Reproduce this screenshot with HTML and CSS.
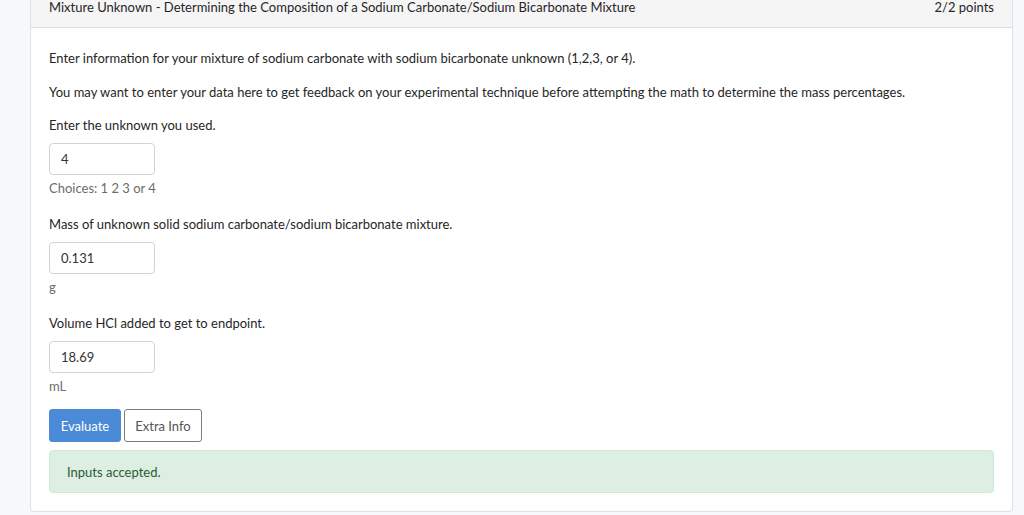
FILE: index.html
```html
<!DOCTYPE html>
<html lang="en">
<head>
<meta charset="utf-8">
<link rel="stylesheet" href="styles.css">
</head>
<body>
<div class="card">
  <div class="card-header">
    <span class="title">Mixture Unknown - Determining the Composition of a Sodium Carbonate/Sodium Bicarbonate Mixture</span>
    <span class="points">2/2 points</span>
  </div>
  <div class="card-body">
    <p>Enter information for your mixture of sodium carbonate with sodium bicarbonate unknown (1,2,3, or 4).</p>
    <p>You may want to enter your data here to get feedback on your experimental technique before attempting the math to determine the mass percentages.</p>
    <div class="group">
      <p class="label">Enter the unknown you used.</p>
      <input class="field" type="text" value="4">
      <div class="help">Choices: 1 2 3 or 4</div>
    </div>
    <div class="group">
      <p class="label">Mass of unknown solid sodium carbonate/sodium bicarbonate mixture.</p>
      <input class="field" type="text" value="0.131">
      <div class="help">g</div>
    </div>
    <div class="group group-last">
      <p class="label">Volume HCl added to get to endpoint.</p>
      <input class="field" type="text" value="18.69">
      <div class="help">mL</div>
    </div>
    <div class="buttons">
      <button class="btn btn-primary">Evaluate</button>
      <button class="btn btn-outline">Extra Info</button>
    </div>
    <div class="alert">Inputs accepted.</div>
  </div>
</div>
</body>
</html>
```
FILE: styles.css
```css
html, body {
  margin: 0;
  padding: 0;
  background: #f7f8fa;
}
body {
  font-family: Lato, "Noto Sans", sans-serif;
  font-size: 13px;
  color: #262626;
  padding: 0 11px 0 30px;
}
.card {
  background: #fff;
  border: 1px solid #dfe0e2;
  border-top: none;
  border-radius: 0 0 4px 4px;
  width: 981px;
}
.card-header {
  display: flex;
  justify-content: space-between;
  align-items: flex-start;
  background: #f5f5f6;
  border-bottom: 1px solid #dcdcdc;
  height: 28px;
  padding: 0 18px;
  line-height: 14px;
  box-sizing: border-box;
}
.card-body {
  padding: 21px 18px 18px 18px;
}
p {
  margin: 0 0 14px 0;
  line-height: 19.5px;
}
.group {
  margin-bottom: 17px;
}
.group-last {
  margin-bottom: 13px;
}
.group .label {
  margin-bottom: 7px;
}
.field {
  display: block;
  box-sizing: border-box;
  width: 106px;
  height: 32px;
  border: 1px solid #d3d3d3;
  border-radius: 4px;
  padding: 0 11px;
  font-family: inherit;
  font-size: 13px;
  color: #333;
  background: #fff;
}
.help {
  margin-top: 4px;
  line-height: 19.5px;
  color: #6c6c6c;
}
.buttons {
  display: flex;
  gap: 3px;
  margin-bottom: 8px;
}
.btn {
  height: 33px;
  border-radius: 3px;
  font-family: inherit;
  font-size: 13px;
  padding: 0 10px;
  box-sizing: border-box;
}
.btn-primary {
  background: #4a8ad6;
  border: 1px solid #4a8ad6;
  color: #fff;
  width: 72px;
}
.btn-outline {
  background: #fff;
  border: 1px solid #7d7d7d;
  color: #555;
  width: 78px;
}
.alert {
  background: #dcefe2;
  border: 1px solid #cfe8d7;
  border-radius: 4px;
  color: #2e5a35;
  height: 43px;
  box-sizing: border-box;
  padding: 0 17px;
  display: flex;
  align-items: center;
}
```
